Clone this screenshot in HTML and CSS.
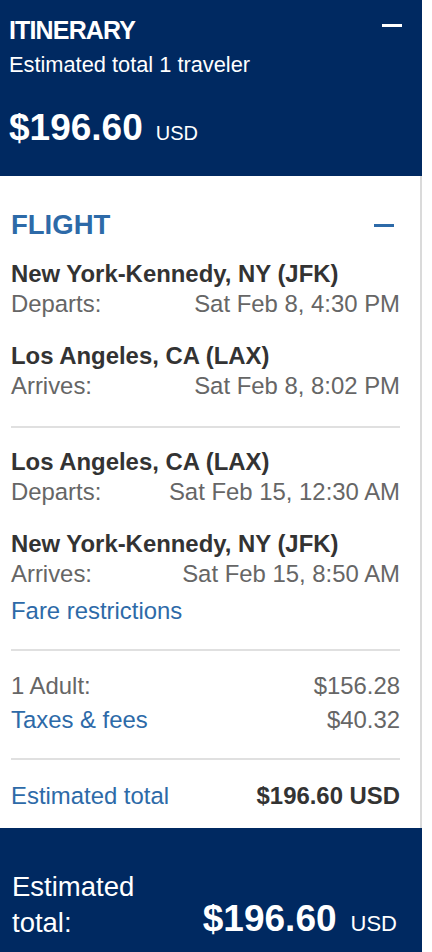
FILE: index.html
```html
<!DOCTYPE html>
<html lang="en">
<head>
  <meta charset="UTF-8">
  <meta name="viewport" content="width=device-width, initial-scale=1.0">
  <title>Itinerary</title>
  <link rel="stylesheet" href="styles.css">
</head>
<body>

  <div class="itinerary">
    <header class="summary">
      <div class="summary-top">
        <h1 class="summary-title">ITINERARY</h1>
        <button class="toggle toggle-light" aria-label="Collapse itinerary"></button>
      </div>
      <p class="summary-sub">Estimated total 1 traveler</p>
      <p class="summary-price">$196.60<span class="cur">USD</span></p>
    </header>

    <section class="details">
      <div class="details-head">
        <h2>FLIGHT</h2>
        <button class="toggle toggle-blue" aria-label="Collapse flight"></button>
      </div>

      <div class="segment segment-first">
        <div class="stop">
          <div class="stop-name">New York-Kennedy, NY (JFK)</div>
          <div class="row"><span>Departs:</span><span>Sat Feb 8, 4:30 PM</span></div>
        </div>
        <div class="stop">
          <div class="stop-name">Los Angeles, CA (LAX)</div>
          <div class="row"><span>Arrives:</span><span>Sat Feb 8, 8:02 PM</span></div>
        </div>
      </div>

      <hr class="rule rule-seg">

      <div class="segment segment-second">
        <div class="stop">
          <div class="stop-name">Los Angeles, CA (LAX)</div>
          <div class="row"><span>Departs:</span><span>Sat Feb 15, 12:30 AM</span></div>
        </div>
        <div class="stop">
          <div class="stop-name">New York-Kennedy, NY (JFK)</div>
          <div class="row"><span>Arrives:</span><span>Sat Feb 15, 8:50 AM</span></div>
        </div>
      </div>
      <a class="link fare" href="#">Fare restrictions</a>

      <hr class="rule rule-fare">

      <div class="prices">
        <div class="row"><span>1 Adult:</span><span>$156.28</span></div>
        <div class="row"><a class="link" href="#">Taxes &amp; fees</a><span>$40.32</span></div>
      </div>

      <hr class="rule rule-prices">

      <div class="row total-row">
        <a class="link" href="#">Estimated total</a>
        <strong>$196.60 USD</strong>
      </div>
    </section>

    <footer class="total-bar">
      <div class="total-label">Estimated<br>total:</div>
      <div class="total-amount">$196.60<span class="cur">USD</span></div>
    </footer>
  </div>

</body>
</html>
```
FILE: styles.css
```css
body {
  margin: 0;
  background-color: #fff;
  font-family: Arial, "Liberation Sans", Helvetica, sans-serif;
}
.itinerary {
  width: 422px;
}

/* top summary */
.summary {
  background-color: #002961;
  color: #fff;
  padding: 16px 20px 26px 9px;
}
.summary-top {
  display: flex;
  justify-content: space-between;
  align-items: flex-start;
}
.summary-title {
  margin: 0;
  font-size: 25px;
  letter-spacing: -0.85px;
  line-height: 28px;
  font-weight: bold;
}
.toggle {
  width: 20px;
  height: 3px;
  border: 0;
  padding: 0;
  cursor: pointer;
}
.toggle-light {
  background-color: #fff;
  margin-top: 8px;
}
.summary-sub {
  margin: 7px 0 0;
  font-size: 21.8px;
  line-height: 28px;
}
.summary-price {
  margin: 27px 0 0;
  font-size: 37px;
  line-height: 44px;
  font-weight: bold;
}
.cur {
  line-height: 1;
  font-weight: normal;
}
.summary-price .cur {
  font-size: 20px;
  margin-left: 13px;
}

/* flight details */
.details {
  border-right: 2px solid #dadada;
  padding: 33px 20px 17px 11px;
  font-size: 23.9px;
  line-height: 30.5px;
  color: #666;
}
.details-head {
  display: flex;
  justify-content: space-between;
  align-items: flex-start;
}
.details-head h2 {
  margin: 0;
  font-size: 27.5px;
  line-height: 32px;
  color: #2d6aa8;
}
.toggle-blue {
  background-color: #2d6aa8;
  margin-top: 15px;
  margin-right: 6px;
}
.segment-first {
  margin-top: 17.5px;
}
.segment-second {
  margin-top: 18.6px;
}
.stop + .stop {
  margin-top: 21px;
}
.stop-name {
  font-weight: bold;
  color: #333;
}
.row {
  display: flex;
  justify-content: space-between;
}
.link {
  color: #2d6aa8;
  text-decoration: none;
}
.fare {
  display: block;
  margin-top: 6.3px;
}
.rule {
  border: 0;
  height: 2px;
  background-color: #e0e0e0;
  margin: 0;
}
.rule-seg {
  margin-top: 24.5px;
}
.rule-fare {
  margin-top: 22.6px;
}
.prices {
  margin-top: 18.1px;
  line-height: 33.5px;
}
.rule-prices {
  margin-top: 22.2px;
}
.total-row {
  margin-top: 20.3px;
}
.total-row strong {
  color: #333;
}

/* bottom bar */
.total-bar {
  background-color: #002961;
  color: #fff;
  display: flex;
  justify-content: space-between;
  align-items: flex-end;
  padding: 41px 25px 10.8px 12px;
}
.total-label {
  font-size: 27.5px;
  line-height: 36px;
}
.total-amount {
  font-size: 37px;
  line-height: 36px;
  font-weight: bold;
  margin-bottom: 4px;
}
.total-amount .cur {
  font-size: 22px;
  margin-left: 14px;
}
```
